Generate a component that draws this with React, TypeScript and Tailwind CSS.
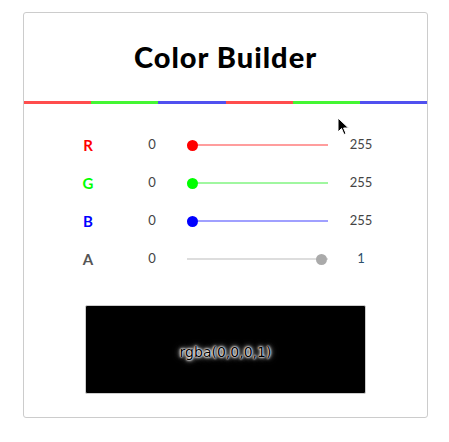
import React from "react";

type Row = { label: string; labelColor: string; value: string; max: string; track: string; thumb: string; pos: "left" | "right" };

const rows: Row[] = [
  { label: "R", labelColor: "text-[#ff0000]", value: "0", max: "255", track: "bg-[#ff9d9d]", thumb: "bg-[#ff0000]", pos: "left" },
  { label: "G", labelColor: "text-[#00ff00]", value: "0", max: "255", track: "bg-[#a0f7a0]", thumb: "bg-[#00ff00]", pos: "left" },
  { label: "B", labelColor: "text-[#0000ff]", value: "0", max: "255", track: "bg-[#a0a0ff]", thumb: "bg-[#0000ff]", pos: "left" },
  { label: "A", labelColor: "text-[#555555]", value: "0", max: "1", track: "bg-[#dddddd]", thumb: "bg-[#aaaaaa]", pos: "right" },
];

export default function App() {
  return (
    <div className="relative w-[449px] h-[442px] bg-white" style={{ fontFamily: "Lato, 'Open Sans', sans-serif" }}>
      <div className="absolute left-[23px] top-[12px] w-[405px] h-[406px] border border-[#cccccc] rounded-[3px] flex flex-col">
        <div className="h-[88px] flex items-center justify-center">
          <h1 className="text-[29px] font-black text-black tracking-[1px]">Color Builder</h1>
        </div>
        <div className="flex h-[3px]">
          <div className="flex-1 bg-[#ff4d4d]" />
          <div className="flex-1 bg-[#44f633]" />
          <div className="flex-1 bg-[#5050ef]" />
          <div className="flex-1 bg-[#ff4d4d]" />
          <div className="flex-1 bg-[#44f633]" />
          <div className="flex-1 bg-[#5050ef]" />
        </div>
        <div className="mt-[22px] flex flex-col pl-[46px]">
          {rows.map((r) => (
            <div key={r.label} className="h-[38px] flex items-center">
              <div className={`w-[36px] text-center text-[15px] font-bold ${r.labelColor}`}>{r.label}</div>
              <div className="w-[52px] ml-[20px] text-center text-[13px] text-[#444444]">{r.value}</div>
              <div className="relative ml-[9px] w-[141px] h-[11px] flex items-center">
                <div className={`w-full h-[2px] ${r.track}`} />
                <div
                  className={`absolute top-0 w-[11px] h-[11px] rounded-full ${r.thumb} ${r.pos === "left" ? "left-0" : "right-[1px]"}`}
                />
              </div>
              <div className={`w-[50px] ml-[8px] text-center text-[13px] ${r.max === "1" ? "text-[#2d4f6e]" : "text-[#444444]"}`}>{r.max}</div>
            </div>
          ))}
        </div>
        <div className="mt-[27px] mx-auto w-[281px] h-[89px] bg-black border border-[#cccccc] rounded-[2px] flex items-center justify-center pt-[5px]">
          <span
            className="text-[14px] text-black"
            style={{ fontFamily: "'DejaVu Sans', Verdana, sans-serif", textShadow: "0 0 1px #fff, 0 0 2px #fff, 0 0 3px #fff, 0 0 4px #ccc, 0 0 6px #999, 0 0 8px #666" }}
          >
            rgba(0,0,0,1)
          </span>
        </div>
      </div>
      <svg className="absolute left-[337px] top-[117px]" width="13" height="20" viewBox="0 0 13 20">
        <path d="M1 1 L1 15 L4.5 11.5 L7 17.5 L9 16.6 L6.6 11 L11.5 11 Z" fill="#000" stroke="#fff" strokeWidth="1" />
      </svg>
    </div>
  );
}
